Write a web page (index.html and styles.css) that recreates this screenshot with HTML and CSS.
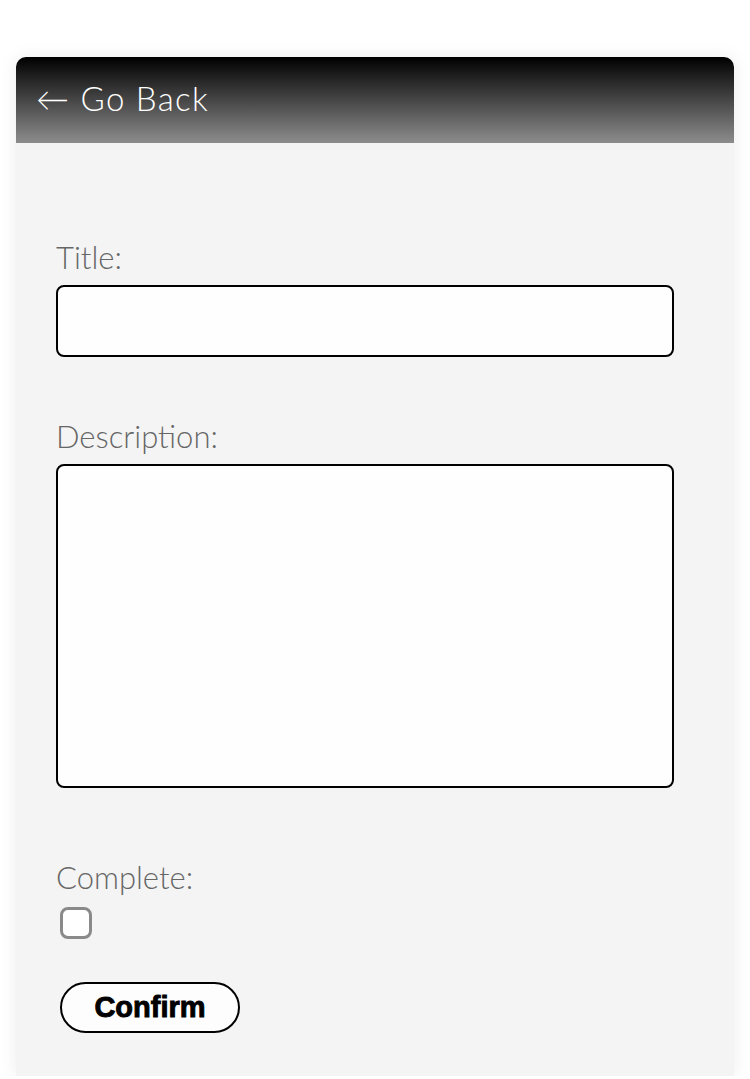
FILE: index.html
```html
<!DOCTYPE html>
<html lang="en">
<head>
    <meta charset="UTF-8">
    <meta name="viewport" content="width=device-width, initial-scale=1.0">
    <title>Edit Todo</title>
    <link rel="stylesheet" href="styles.css">
</head>
<body>
    <div class="card">
        <div class="card-header">
            <a href="#" class="back-link">&larr; Go Back</a>
        </div>
        <form class="todo-form">
            <label for="title">Title:</label>
            <input type="text" id="title">

            <label for="description">Description:</label>
            <textarea id="description"></textarea>

            <label for="complete">Complete:</label>
            <input type="checkbox" id="complete">

            <button type="button" class="confirm-btn">Confirm</button>
        </form>
    </div>
</body>
</html>
```

FILE: styles.css
```css
body {
    margin: 0;
    background-color: #ffffff;
    font-family: 'Lato', sans-serif;
}

.card {
    margin: 57px 16px 0;
    height: 1019px;
    background-color: #f4f4f4;
    border-radius: 10px 10px 0 0;
    box-shadow: 0 0 18px rgba(0, 0, 0, 0.08);
}

.card-header {
    height: 86px;
    padding: 0 20px;
    display: flex;
    align-items: center;
    border-radius: 10px 10px 0 0;
    background: linear-gradient(180deg, #000000 0%, #8c8c8c 100%);
}

.back-link {
    color: #ffffff;
    text-decoration: none;
    font-size: 33px;
    font-weight: 300;
    letter-spacing: 1.3px;
    margin-top: -4px;
}

.todo-form {
    display: flex;
    flex-direction: column;
    align-items: flex-start;
    padding: 95px 0 0 40px;
}

label {
    color: #666;
    font-size: 31px;
    font-weight: 300;
    margin-bottom: 9px;
}

input[type="text"],
textarea {
    box-sizing: border-box;
    width: 618px;
    border: 2px solid #000;
    border-radius: 8px;
    background-color: #fefefe;
    font-family: inherit;
    font-size: 20px;
    margin: 0 0 60px;
    padding: 10px;
}

input[type="text"] {
    height: 72px;
}

textarea {
    height: 324px;
    resize: none;
    margin-bottom: 70px;
}

input[type="checkbox"] {
    appearance: none;
    -webkit-appearance: none;
    box-sizing: border-box;
    width: 32px;
    height: 32px;
    margin: 2px 0 0 4px;
    border: 3px solid #8a8a8a;
    border-radius: 8px;
    background-color: #fff;
}

.confirm-btn {
    margin: 43px 0 0 4px;
    width: 180px;
    height: 51px;
    border: 2px solid #000;
    border-radius: 26px;
    background-color: #fdfdfd;
    color: #000;
    font-family: 'Liberation Sans', sans-serif;
    font-size: 29px;
    font-weight: 900;
    -webkit-text-stroke: 0.9px #000;
    cursor: pointer;
}
```
